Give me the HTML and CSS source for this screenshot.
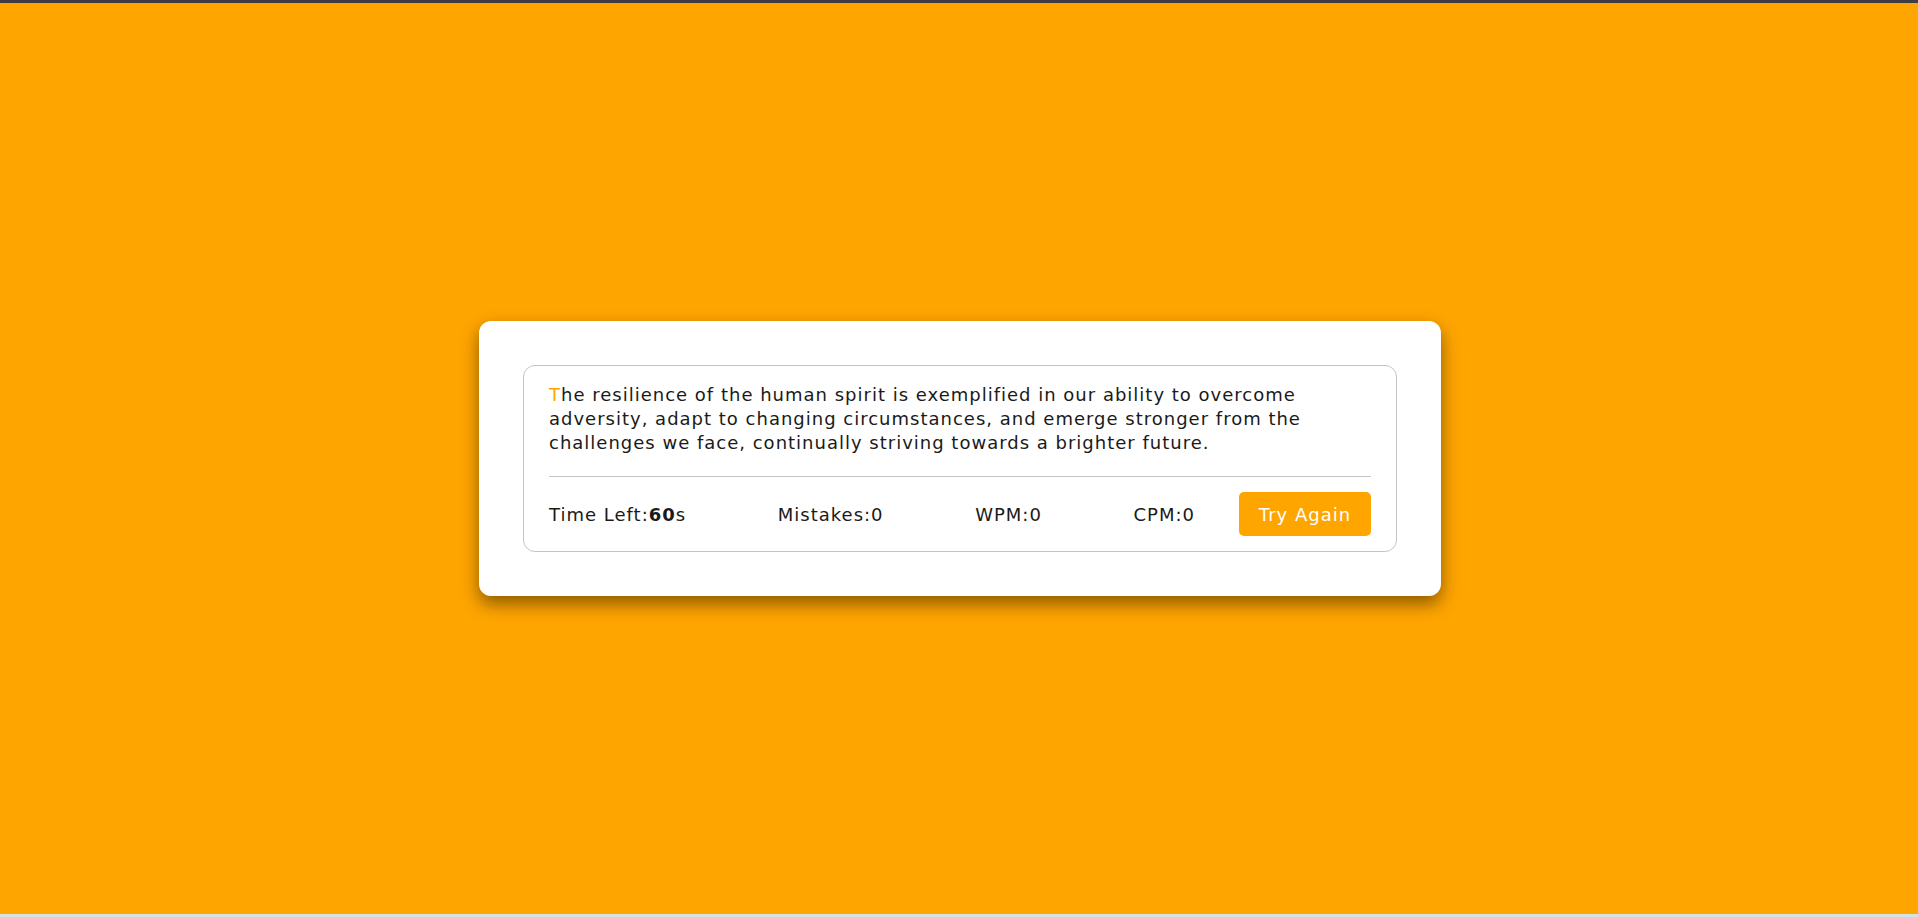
FILE: index.html
```html
<!DOCTYPE html>
<html lang="en">
<head>
<meta charset="utf-8">
<title>Typing Test</title>
<link rel="stylesheet" href="styles.css">
</head>
<body>
<div class="topbar"></div>
<main class="stage">
  <div class="wrapper">
    <div class="content-box">
      <div class="typing-text">
        <p><span class="active">T</span>he resilience of the human spirit is exemplified in our ability to overcome adversity, adapt to changing circumstances, and emerge stronger from the challenges we face, continually striving towards a brighter future.</p>
      </div>
      <div class="content">
        <ul class="result-details">
          <li class="time">Time Left:<b>60</b>s</li>
          <li class="mistake">Mistakes:<span>0</span></li>
          <li class="wpm">WPM:<span>0</span></li>
          <li class="cpm">CPM:<span>0</span></li>
        </ul>
        <button class="btn">Try Again</button>
      </div>
    </div>
  </div>
</main>
<div class="bottombar"></div>
</body>
</html>
```

FILE: styles.css
```css
* { box-sizing: border-box; }
html, body { margin: 0; padding: 0; height: 100%; }
body {
  display: flex;
  flex-direction: column;
  background: #ffa500;
  font-family: "DejaVu Sans", Verdana, sans-serif;
  color: #1a1a1a;
}
.topbar { height: 3px; background: #3f3c45; flex: none; }
.bottombar { height: 3px; background: #d3e3e4; flex: none; }
.stage {
  flex: 1;
  display: flex;
  align-items: center;
  justify-content: center;
}
.wrapper {
  width: 962px;
  margin-left: 2px;
  padding: 44px;
  background: #fff;
  border-radius: 12px;
  box-shadow: 0 8px 18px rgba(0, 0, 0, 0.45);
}
.content-box {
  border: 1px solid #c4c4c4;
  border-radius: 12px;
  padding: 17px 25px 0;
}
.typing-text p {
  margin: 0;
  font-size: 18px;
  line-height: 24px;
  letter-spacing: 1px;
}
.typing-text .active { color: #ffa500; }
.content {
  margin-top: 21px;
  border-top: 1px solid #c4c4c4;
  padding: 15px 0;
  display: flex;
  align-items: center;
  justify-content: space-between;
}
.result-details {
  margin: 0;
  padding: 0;
  list-style: none;
  width: calc(100% - 176px);
  display: flex;
  align-items: center;
  justify-content: space-between;
  font-size: 18px;
  letter-spacing: 1px;
}
.result-details b { font-weight: bold; }
.btn {
  width: 132px;
  height: 44px;
  border: none;
  border-radius: 5px;
  background: #ffa500;
  color: #fff;
  font-family: "DejaVu Sans", Verdana, sans-serif;
  font-size: 18px;
  letter-spacing: 1px;
  padding: 0;
}
```
